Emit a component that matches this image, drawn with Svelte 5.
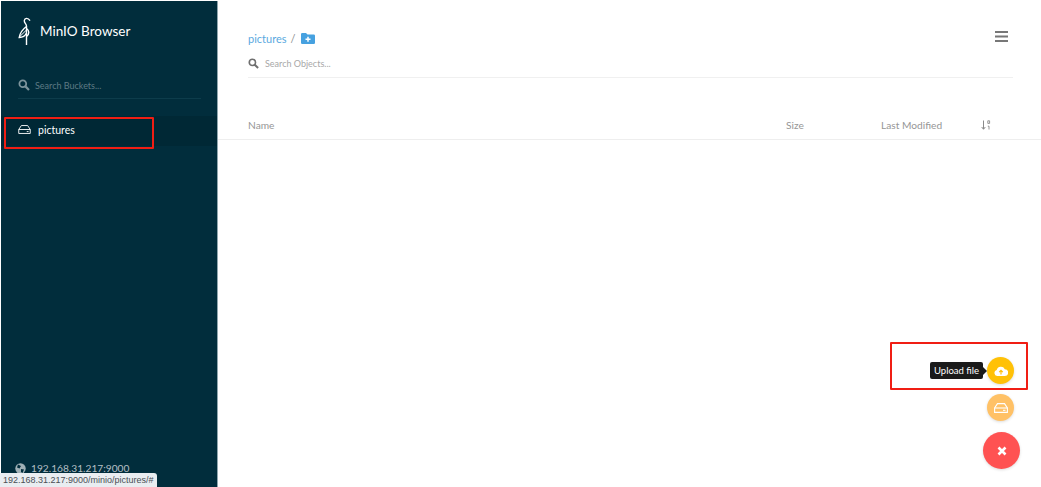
<script>
	const columns = [
		{ label: 'Name', cls: 'col-name' },
		{ label: 'Size', cls: 'col-size' },
		{ label: 'Last Modified', cls: 'col-modified' }
	];
</script>

<style>
	:global(body) {
		margin: 0;
		background: #fff;
		font-family: Lato, 'Liberation Sans', sans-serif;
	}
	.page {
		position: relative;
		display: flex;
		height: 487px;
		overflow: hidden;
		padding: 1px 0 0 1px;
		box-sizing: border-box;
	}
	.sidebar {
		width: 217px;
		flex: none;
		box-sizing: border-box;
		background: #012d3c;
		border-right: 1px solid #8fa6ae;
		display: flex;
		flex-direction: column;
	}
	.logo {
		display: flex;
		align-items: center;
		gap: 9px;
		height: 30px;
		margin: 15px 0 0 17px;
		color: #fff;
		font-size: 13.5px;
	}
	.bucket-search {
		display: flex;
		align-items: center;
		gap: 5px;
		margin: 27px 16px 0 17px;
		height: 26px;
		border-bottom: 1px solid #0d3c4b;
		color: #5d7a84;
		font-size: 9px;
		box-sizing: border-box;
		padding-bottom: 1px;
	}
	.bucket {
		display: flex;
		align-items: center;
		gap: 7px;
		height: 30px;
		margin-top: 17px;
		padding: 0 0 3px 17px;
		box-sizing: border-box;
		background: #002835;
		color: #fff;
		font-size: 10.5px;
	}
	.host {
		margin-top: auto;
		display: flex;
		align-items: center;
		gap: 5px;
		height: 14px;
		padding: 0 0 12px 14px;
		color: #b3bfc4;
		font-size: 10.2px;
	}
	.content {
		flex: 1;
		display: flex;
		flex-direction: column;
	}
	.head {
		margin: 0 28px 0 30px;
		position: relative;
		height: 76px;
		border-bottom: 1px solid #f0f0f0;
	}
	.crumb {
		display: flex;
		align-items: center;
		gap: 4px;
		padding-top: 29px;
		height: 16px;
		font-size: 11px;
		color: #8e8e8e;
	}
	.crumb a {
		color: #5aa9e0;
		text-decoration: none;
	}
	.object-search {
		display: flex;
		align-items: center;
		gap: 6px;
		margin-top: 9px;
		height: 16px;
		font-size: 9px;
		color: #a8a8a8;
	}
	.menu {
		position: absolute;
		top: 30px;
		right: 5px;
		display: block;
	}
	.table-head {
		display: flex;
		align-items: center;
		margin-top: 34px;
		height: 26px;
		padding: 0 0 1px 30px;
		border-bottom: 1px solid #eeeeee;
		font-size: 10.2px;
		color: #969696;
	}
	.col-name { width: 538px; }
	.col-size { width: 95px; }
	.col-modified { width: 100px; }
	.fabs {
		position: absolute;
		right: 21px;
		bottom: 18px;
		display: flex;
		flex-direction: column;
		align-items: center;
	}
	.fab {
		border-radius: 50%;
		display: flex;
		align-items: center;
		justify-content: center;
		position: relative;
		box-shadow: 0 1px 3px rgba(0, 0, 0, 0.14);
	}
	.upload { width: 27px; height: 27px; background: #ffc107; margin-right: 2px; }
	.make { width: 27px; height: 27px; background: #ffc166; margin: 10px 2px 0 0; }
	.close { width: 37px; height: 37px; background: #ff5252; margin-top: 11px; }
	.tip {
		position: absolute;
		right: 31px;
		top: 5px;
		width: 53px;
		height: 17px;
		line-height: 17px;
		background: #1a1a1a;
		color: #fff;
		font-size: 9.5px;
		text-align: center;
		border-radius: 2px;
	}
	.tip::after {
		content: '';
		position: absolute;
		right: -4px;
		top: 5px;
		border-left: 4px solid #1a1a1a;
		border-top: 4px solid transparent;
		border-bottom: 4px solid transparent;
	}
	.mark {
		position: absolute;
		border: 2px solid #f01e14;
		border-radius: 1px;
		box-sizing: border-box;
	}
	.mark-bucket { left: 4px; top: 117px; width: 150px; height: 32px; }
	.mark-upload { left: 890px; top: 342px; width: 138px; height: 48px; }
	.status {
		position: absolute;
		left: 0;
		bottom: 0;
		width: 157px;
		height: 14px;
		line-height: 14px;
		padding-left: 3px;
		box-sizing: border-box;
		overflow: hidden;
		background: #e9edf1;
		border-top-right-radius: 3px;
		color: #4a4f55;
		font-family: 'Liberation Sans', sans-serif;
		font-size: 9px;
		white-space: nowrap;
	}
</style>

<div class="page">
	<aside class="sidebar">
		<div class="logo">
			<svg width="13" height="30" viewBox="0 0 13 30" fill="none" stroke="#fff" stroke-width="1.4">
				<path d="M8.5 29V10C8.5 8 6 7 6.3 4.5C6.7 1.8 10 1.4 12 4.6" />
				<path d="M8.5 10.5C5 13 2 17 1.2 21.5C4 21.5 7 20.5 8.5 17" />
				<path d="M1.8 20.5L8.5 14" stroke-width="1" />
				<path d="M8.5 12.5C11.3 14.5 11.8 18 8.5 20.5" />
			</svg>
			<span>MinIO Browser</span>
		</div>
		<div class="bucket-search">
			<svg width="12" height="12" viewBox="0 0 12 12" fill="none" stroke="#7d949c" stroke-width="1.8">
				<circle cx="4.8" cy="4.8" r="3.4" />
				<path d="M7.4 7.4L11 11" stroke-width="2.2" />
			</svg>
			<span>Search Buckets...</span>
		</div>
		<div class="bucket">
			<svg width="13" height="9" viewBox="0 0 14 10" fill="none" stroke="#fff" stroke-width="1">
				<path d="M3.5 .6H10.5L13.4 5V9.4H.6V5Z" />
				<path d="M.6 5H13.4" />
				<path d="M9.5 7.3H11.5" />
			</svg>
			<span>pictures</span>
		</div>
		<div class="host">
			<svg width="11" height="11" viewBox="0 0 11 11">
				<circle cx="5.5" cy="5.5" r="5.2" fill="#9fb0b6" />
				<path d="M3 1.5L6 3L4.5 5.5L2 4.5ZM6 6L9 6.5L7.5 10L6 9Z" fill="#012d3c" />
			</svg>
			<span>192.168.31.217:9000</span>
		</div>
	</aside>

	<main class="content">
		<header class="head">
			<div class="crumb">
				<a href="#/">pictures</a>
				<span>/</span>
				<svg width="14" height="11" viewBox="0 0 14 11" style="margin-left:2px">
					<path d="M0 1.2Q0 0 1.2 0H5L6.5 1.5H12.8Q14 1.5 14 2.7V9.8Q14 11 12.8 11H1.2Q0 11 0 9.8Z" fill="#46a1e0" />
					<path d="M7 3.8V8.8M4.5 6.3H9.5" stroke="#fff" stroke-width="1.5" />
				</svg>
			</div>
			<div class="object-search">
				<svg width="11" height="11" viewBox="0 0 12 12" fill="none" stroke="#6f6f6f" stroke-width="1.8">
					<circle cx="4.8" cy="4.8" r="3.4" />
					<path d="M7.4 7.4L11 11" stroke-width="2.2" />
				</svg>
				<span>Search Objects...</span>
			</div>
			<svg class="menu" width="13" height="11" viewBox="0 0 13 11" fill="#777">
				<rect width="13" height="2" />
				<rect y="4.5" width="13" height="2" />
				<rect y="9" width="13" height="2" />
			</svg>
		</header>

		<div class="table-head">
			{#each columns as col}
				<span class={col.cls}>{col.label}</span>
			{/each}
			<svg width="10" height="10" viewBox="0 0 10 10" fill="none" stroke="#8a8a8a">
				<path d="M2.5 0.5V9M.7 7L2.5 9.3L4.3 7" />
				<path d="M6.8 .8H8.6V3.4H6.8ZM6.8 6.2H8V9.5" stroke-width=".9" />
			</svg>
		</div>
	</main>

	<div class="fabs">
		<div class="fab upload">
			<span class="tip">Upload file</span>
			<svg width="14" height="10" viewBox="0 0 14 10">
				<path d="M3.2 10A3 3 0 0 1 2.7 4.1A4.3 4.3 0 0 1 10.8 3.2A3.4 3.4 0 0 1 10.8 10Z" fill="#fff" />
				<path d="M7 8.5V4.5M5.2 6.2L7 4.3L8.8 6.2" stroke="#ffc107" stroke-width="1.2" fill="none" />
			</svg>
		</div>
		<div class="fab make">
			<svg width="14" height="10" viewBox="0 0 14 10" fill="none" stroke="#fff" stroke-width="1.1">
				<path d="M3.5 .6H10.5L13.4 5V9.4H.6V5Z" />
				<path d="M.6 5H13.4" />
				<path d="M9 7.3H11.5" />
			</svg>
		</div>
		<div class="fab close">
			<svg width="10" height="10" viewBox="0 0 10 10" stroke="#fff" stroke-width="2.6">
				<path d="M1.5 1.5L8.5 8.5M8.5 1.5L1.5 8.5" />
			</svg>
		</div>
	</div>

	<div class="mark mark-bucket"></div>
	<div class="mark mark-upload"></div>
	<div class="status">192.168.31.217:9000/minio/pictures/#</div>
</div>
